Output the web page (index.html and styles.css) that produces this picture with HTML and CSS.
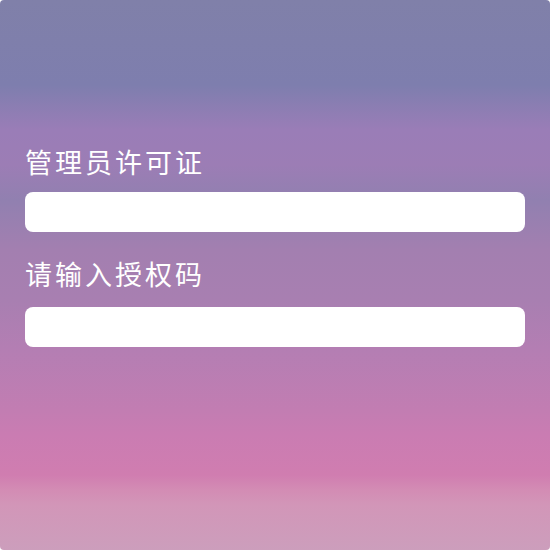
FILE: index.html
```
<!DOCTYPE html>
<html lang="zh-CN">
<head>
<meta charset="utf-8">
<title>管理员许可证</title>
<link rel="stylesheet" href="styles.css">
</head>
<body>
<div class="panel">
  <form class="form">
    <div class="field field-first">
      <label class="label" for="license">管理员许可证</label>
      <input class="input" id="license" type="text">
    </div>
    <div class="field field-second">
      <label class="label" for="code">请输入授权码</label>
      <input class="input" id="code" type="text">
    </div>
  </form>
</div>
</body>
</html>
```
FILE: styles.css
```
html, body {
  margin: 0;
  padding: 0;
  background: #ffffff;
}
.panel {
  width: 550px;
  height: 550px;
  box-sizing: border-box;
  border-radius: 4px;
  padding: 147px 25px 0 25px;
  background: linear-gradient(180deg,
    #8080a9 0px,
    #7e7eae 85px,
    #9a7db7 130px,
    #9c7db5 165px,
    #9180b0 200px,
    #a37fb0 250px,
    #a87fb1 300px,
    #b47eb3 350px,
    #c27db2 410px,
    #ca7cb2 435px,
    #d07db0 475px,
    #d38cb4 490px,
    #d296b8 505px,
    #cc9ebc 550px);
  font-family: "Noto Sans CJK SC", "Noto Sans", sans-serif;
}
.form {
  display: flex;
  flex-direction: column;
}
.field {
  display: flex;
  flex-direction: column;
}
.field-first .label {
  margin-bottom: 15px;
}
.field-second {
  margin-top: 27px;
}
.field-second .label {
  margin-bottom: 18px;
}
.label {
  color: #ffffff;
  font-size: 27px;
  line-height: 30px;
  height: 30px;
  letter-spacing: 3px;
  white-space: nowrap;
}
.input {
  display: block;
  width: 500px;
  height: 40px;
  box-sizing: border-box;
  border: none;
  border-radius: 8px;
  background: #ffffff;
  margin: 0;
  padding: 0 12px;
  outline: none;
}
```
